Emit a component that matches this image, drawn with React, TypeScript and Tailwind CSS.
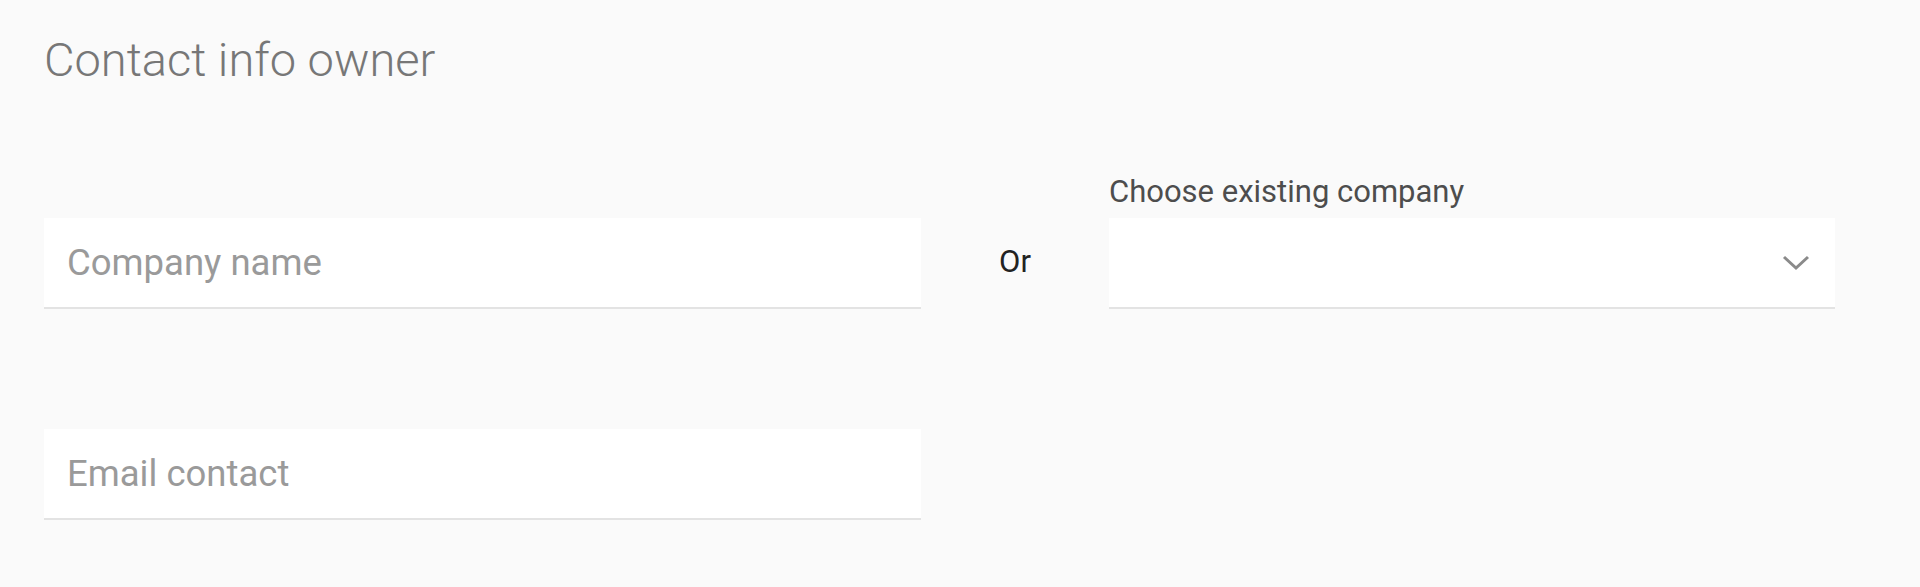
import { useState } from "react";

export default function App() {
  const [company, setCompany] = useState("");
  const [email, setEmail] = useState("");

  return (
    <div className="min-h-screen bg-[#fafafa] pl-[44px] pt-[32px] font-['Roboto',sans-serif]">
      <h1 className="text-[47px] font-light leading-[56px] text-[#777]">Contact info owner</h1>

      {/* Company row */}
      <div className="mt-[86px] flex items-end">
        <input
          value={company}
          onChange={(e) => setCompany(e.target.value)}
          placeholder="Company name"
          className="h-[91px] w-[877px] border-b-2 border-[#e3e3e3] bg-white pl-[23px] text-[36.5px] text-[#333] outline-none placeholder:text-[#9a9a9a]"
        />
        <div className="flex h-[91px] w-[188px] items-center justify-center pb-[2px] text-[31px] text-[#222]">Or</div>
        <div className="flex flex-col">
          <label className="mb-[9px] text-[31px] leading-[35px] text-[#4d4d4d]">Choose existing company</label>
          <div className="flex h-[91px] w-[726px] items-center justify-end border-b-2 border-[#e3e3e3] bg-white pr-[25px]">
            <svg width="28" height="16" viewBox="0 0 28 16" fill="none">
              <path d="M2 2 L14 13 L26 2" stroke="#8a8a8a" strokeWidth="3" />
            </svg>
          </div>
        </div>
      </div>

      {/* Email row */}
      <div className="mt-[120px]">
        <input
          value={email}
          onChange={(e) => setEmail(e.target.value)}
          placeholder="Email contact"
          className="h-[91px] w-[877px] border-b-2 border-[#e3e3e3] bg-white pl-[23px] text-[36.5px] text-[#333] outline-none placeholder:text-[#9a9a9a]"
        />
      </div>
    </div>
  );
}
